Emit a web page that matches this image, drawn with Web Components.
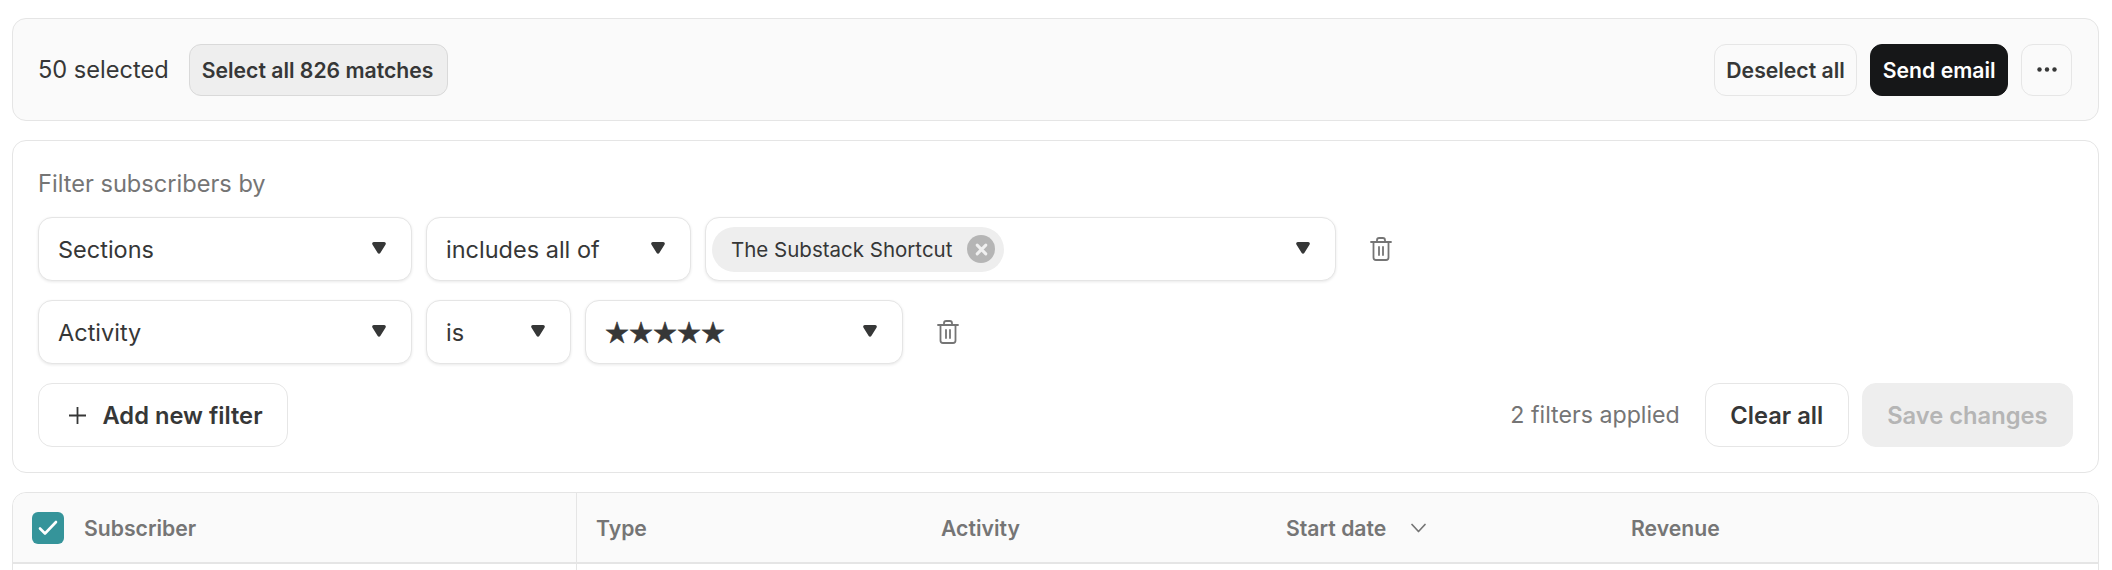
<!doctype html>
<html>
<head>
<meta charset="utf-8">
<title>Subscribers</title>
<style>
  html, body { margin: 0; height: 570px; overflow: hidden; background: #fff; }
  body { font-family: Inter, "Liberation Sans", sans-serif; color: #363737; }
  .page { display: flex; flex-direction: column; gap: 19px; padding: 18px 13px 0 12px; }
</style>
</head>
<body>
<div class="page">
  <bulk-bar>
    <span slot="count">50 selected</span>
    <ui-button slot="start" variant="muted">Select all 826 matches</ui-button>
    <ui-button slot="end" variant="ghost">Deselect all</ui-button>
    <ui-button slot="end" variant="dark">Send email</ui-button>
    <ui-button slot="end" variant="ghost" square>
      <svg width="20" height="5" viewBox="0 0 20 5" fill="currentColor"><circle cx="2.500" cy="2.500" r="2.200"/><circle cx="10" cy="2.500" r="2.200"/><circle cx="17.500" cy="2.500" r="2.200"/></svg>
    </ui-button>
  </bulk-bar>

  <filter-card heading="Filter subscribers by">
    <filter-row>
      <filter-select style="--w:374px">Sections</filter-select>
      <filter-select style="--w:265px">includes all of</filter-select>
      <filter-select style="--w:630.500px" compact><filter-tag>The Substack Shortcut</filter-tag></filter-select>
    </filter-row>
    <filter-row>
      <filter-select style="--w:374px">Activity</filter-select>
      <filter-select style="--w:145px">is</filter-select>
      <filter-select style="--w:318px"><span style="font:24px/1 'Noto Sans CJK SC',sans-serif;padding-bottom:3px;-webkit-text-stroke:.4px currentColor">★★★★★</span></filter-select>
    </filter-row>
    <ui-button slot="add" size="large">
      <svg width="17" height="17" viewBox="0 0 17 17" fill="none" stroke="currentColor" stroke-width="1.800" style="margin:0 17px 0 5px"><path d="M8.500 0v17M0 8.500h17"/></svg>Add new filter
    </ui-button>
    <span slot="status">2 filters applied</span>
    <ui-button slot="actions" size="large">Clear all</ui-button>
    <ui-button slot="actions" size="large" variant="disabled">Save changes</ui-button>
  </filter-card>

  <subscriber-table>
    <sub-column first checked>Subscriber</sub-column>
    <sub-column>Type</sub-column>
    <sub-column>Activity</sub-column>
    <sub-column sorted>Start date</sub-column>
    <sub-column>Revenue</sub-column>
  </subscriber-table>
</div>

<script>
// small helper: every element gets an open shadow root from a template string
function shadow(el, html) {
  const t = document.createElement("template");
  t.innerHTML = html;
  el.attachShadow({ mode: "open" }).appendChild(t.content.cloneNode(true));
}

class UiButton extends HTMLElement {
  connectedCallback() {
    if (this.shadowRoot) return;
    shadow(this, `
      <style>
        :host {
          display: inline-flex; align-items: center; justify-content: center; box-sizing: border-box;
          height: 52px; padding: 0 11.500px; border: 1px solid #e6e6e6; border-radius: 12px;
          font-size: 21.200px; font-weight: 570; color: #363737; white-space: nowrap;
        }
        :host([size="large"]) { height: 64px; padding: 0 24.500px; font-size: 23.700px; background: #fff; border-radius: 14px; }
        :host([variant="muted"]) { padding: 0 13px 0 12px; background: #eeeeee; border-color: #d9d9d9; }
        :host([variant="dark"]) { background: #161718; border-color: #161718; color: #fff; }
        :host([variant="disabled"]) { background: #eeeeee; border-color: #eeeeee; color: #b5b5b5; }
        :host([square]) { width: 51px; padding: 0; }
      </style>
      <slot></slot>`);
  }
}

class BulkBar extends HTMLElement {
  connectedCallback() {
    if (this.shadowRoot) return;
    shadow(this, `
      <style>
        :host {
          display: flex; align-items: center; justify-content: space-between; box-sizing: border-box;
          height: 103px; padding: 0 26px 0 25px; background: #fafafa; border: 1px solid #e5e5e5; border-radius: 14px;
        }
        .start { display: flex; align-items: center; gap: 20px; font-size: 23.600px; }
        .end { display: flex; align-items: center; gap: 13px; }
      </style>
      <div class="start"><slot name="count"></slot><slot name="start"></slot></div>
      <div class="end"><slot name="end"></slot></div>`);
  }
}

class FilterCard extends HTMLElement {
  connectedCallback() {
    if (this.shadowRoot) return;
    shadow(this, `
      <style>
        :host {
          display: flex; flex-direction: column; box-sizing: border-box;
          height: 333px; padding: 29px 25px 25px; border: 1px solid #e5e5e5; border-radius: 14px;
        }
        h2 { margin: 0 0 20px; font-size: 23.600px; line-height: 27px; font-weight: 400; color: #757575; }
        .rows { display: flex; flex-direction: column; gap: 19px; }
        .foot { display: flex; align-items: center; margin-top: 19px; }
        .right { display: flex; align-items: center; margin-left: auto; }
        .status { font-size: 23.200px; color: #757575; margin-right: 25px; }
        .actions { display: flex; gap: 13px; }
      </style>
      <h2>${this.getAttribute("heading")}</h2>
      <div class="rows"><slot></slot></div>
      <div class="foot">
        <slot name="add"></slot>
        <div class="right">
          <span class="status"><slot name="status"></slot></span>
          <div class="actions"><slot name="actions"></slot></div>
        </div>
      </div>`);
  }
}

class FilterRow extends HTMLElement {
  connectedCallback() {
    if (this.shadowRoot) return;
    shadow(this, `
      <style>
        :host { display: flex; align-items: center; gap: 14px; }
        svg { margin-left: 20px; color: #757575; }
      </style>
      <slot></slot>
      <svg width="22" height="24" viewBox="0 0 22 24" fill="none" stroke="currentColor" stroke-width="1.800" stroke-linecap="round" stroke-linejoin="round">
        <path d="M1 5h20"/>
        <path d="M7 5V3.200C7 2 8 1 9.200 1h3.600C14 1 15 2 15 3.200V5"/>
        <path d="M3.500 5v15.500C3.500 22 4.500 23 6 23h10c1.500 0 2.500-1 2.500-2.500V5"/>
        <path d="M9 10v8M13 10v8"/>
      </svg>`);
  }
}

class FilterSelect extends HTMLElement {
  connectedCallback() {
    if (this.shadowRoot) return;
    shadow(this, `
      <style>
        :host {
          display: flex; align-items: center; justify-content: space-between; box-sizing: border-box;
          width: var(--w); height: 64px; padding: 0 25px 0 19px; background: #fff;
          border: 1px solid #e5e5e5; border-radius: 14px; box-shadow: 0 1px 3px rgba(0,0,0,.09);
          font-size: 23.500px; color: #363737;
        }
        :host([compact]) { padding-left: 6px; }
        svg { flex: none; margin-top: -3px; }
      </style>
      <slot></slot>
      <svg width="14" height="12" viewBox="0 0 14 12" fill="#363737"><path d="M1.800 0h10.400c1.300 0 2 1.300 1.400 2.400L8.300 11c-.6 1-2 1-2.600 0L.4 2.400C-.2 1.300.5 0 1.800 0z"/></svg>`);
  }
}

class FilterTag extends HTMLElement {
  connectedCallback() {
    if (this.shadowRoot) return;
    shadow(this, `
      <style>
        :host {
          display: inline-flex; align-items: center; gap: 15px; box-sizing: border-box;
          height: 45px; padding: 0 9px 0 19px; background: #eeeeee; border-radius: 23px;
          font-size: 20.500px; color: #363737;
        }
        .x { display: flex; align-items: center; justify-content: center; width: 28px; height: 28px; background: #b5b5b5; border-radius: 50%; }
      </style>
      <slot></slot>
      <span class="x"><svg width="13" height="13" viewBox="0 0 12 12" fill="none" stroke="#f0f0f0" stroke-width="2.800" stroke-linecap="round"><path d="M2 2l8 8M10 2l-8 8"/></svg></span>`);
  }
}

class SubscriberTable extends HTMLElement {
  connectedCallback() {
    if (this.shadowRoot) return;
    shadow(this, `
      <style>
        :host { display: block; box-sizing: border-box; height: 200px; border: 1px solid #e5e5e5; border-radius: 14px; }
        .head {
          display: grid; grid-template-columns: 564px 345px 345px 345px 1fr; box-sizing: border-box; height: 71px;
          background: #fafafa; border-bottom: 2px solid #e5e5e5; border-radius: 14px 14px 0 0;
        }
        .body { height: 120px; margin-left: 563px; border-left: 1px solid #e5e5e5; }
      </style>
      <div class="head"><slot></slot></div>
      <div class="body"></div>`);
  }
}

class SubColumn extends HTMLElement {
  connectedCallback() {
    if (this.shadowRoot) return;
    const check = this.hasAttribute("checked") ? `
      <span class="box"><svg width="20" height="16" viewBox="0 0 20 16" fill="none" stroke="#fff" stroke-width="2.600" stroke-linecap="round" stroke-linejoin="round"><path d="M2 8.500l5 5L18 2"/></svg></span>` : "";
    const sort = this.hasAttribute("sorted") ? `
      <svg class="sort" width="15" height="10" viewBox="0 0 15 10" fill="none" stroke="#757575" stroke-width="1.700" stroke-linecap="round" stroke-linejoin="round"><path d="M1 1.500l6.500 7 6.500-7"/></svg>` : "";
    shadow(this, `
      <style>
        :host {
          display: flex; align-items: center; box-sizing: border-box; padding-left: 19px;
          font-size: 21.200px; font-weight: 570; color: #757575;
        }
        :host([first]) { border-right: 1px solid #e5e5e5; }
        .box { display: flex; align-items: center; justify-content: center; width: 32px; height: 32px; margin-right: 20px; background: #35949a; border-radius: 6px; }
        .sort { margin-left: 25px; }
      </style>
      ${check}<slot></slot>${sort}`);
  }
}

customElements.define("ui-button", UiButton);
customElements.define("bulk-bar", BulkBar);
customElements.define("filter-card", FilterCard);
customElements.define("filter-row", FilterRow);
customElements.define("filter-select", FilterSelect);
customElements.define("filter-tag", FilterTag);
customElements.define("subscriber-table", SubscriberTable);
customElements.define("sub-column", SubColumn);
</script>
</body>
</html>
